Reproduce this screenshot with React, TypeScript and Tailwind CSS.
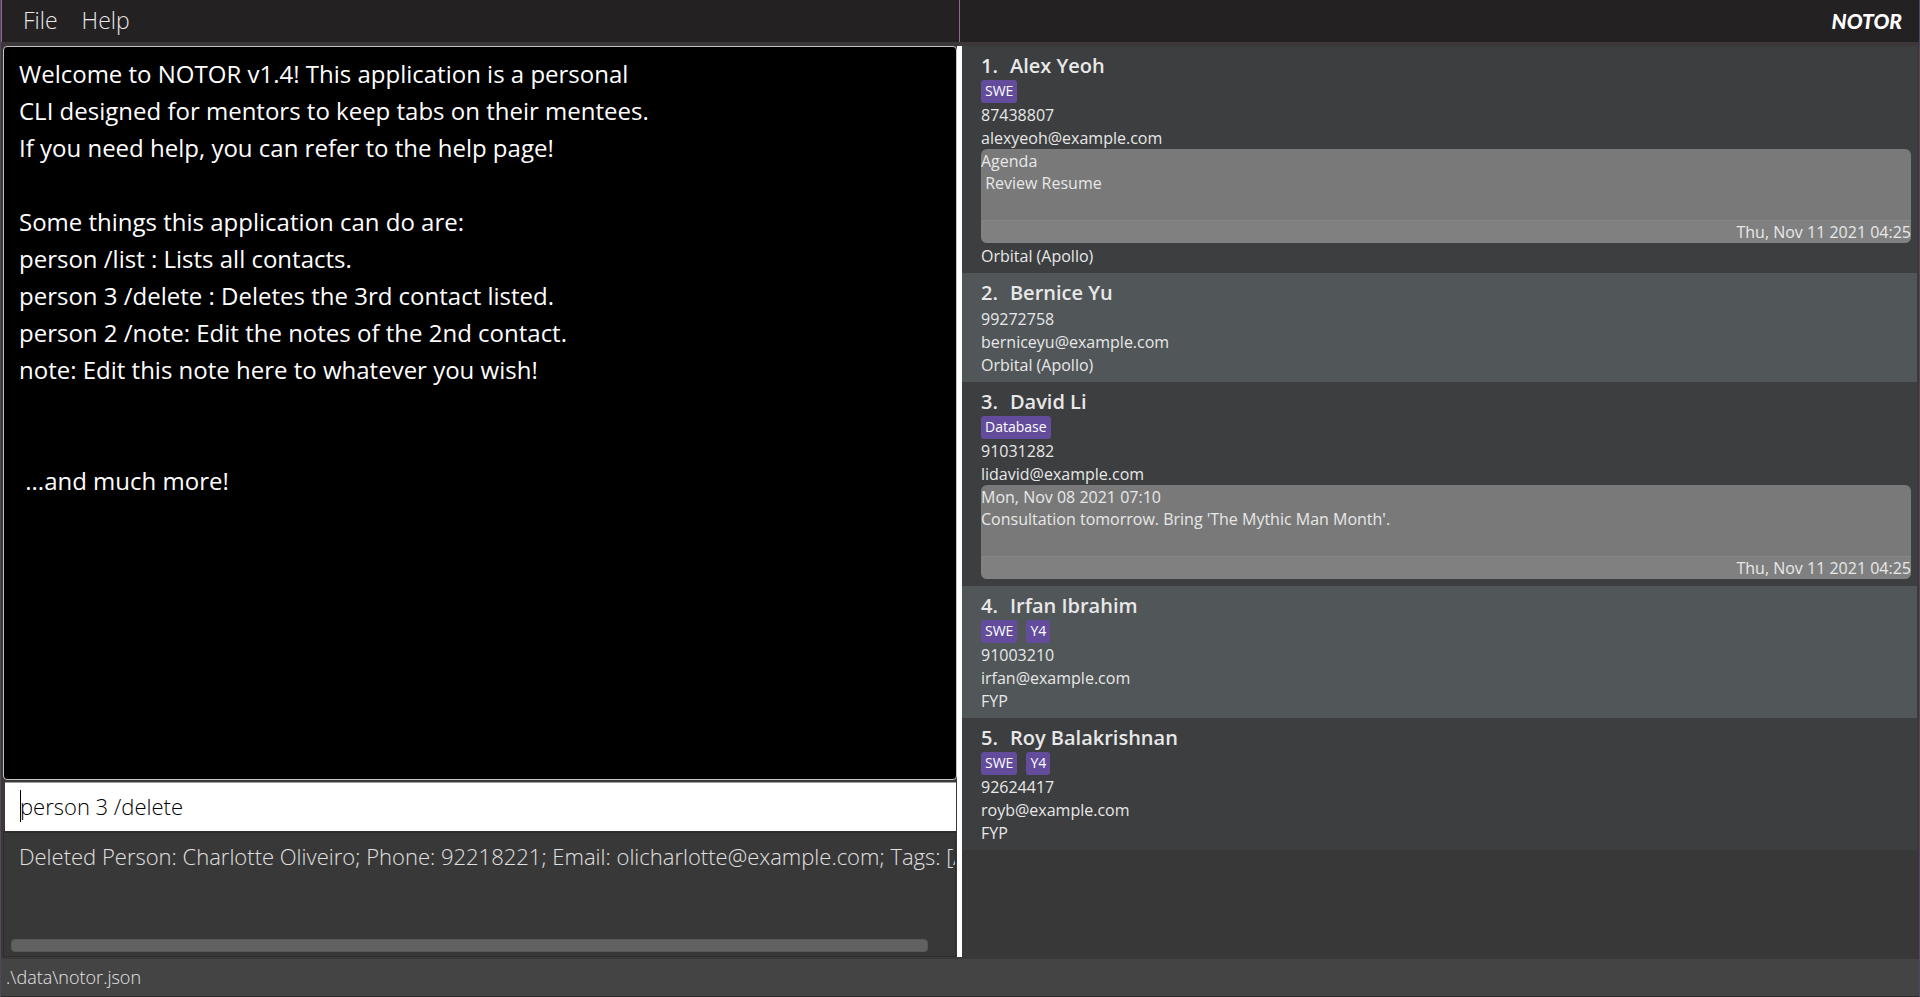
import React from 'react';

type Note = { text: string; saved: string };
type Person = {
  name: string;
  tags: string[];
  phone: string;
  email: string;
  note?: Note;
  group?: string;
};

const people: Person[] = [
  {
    name: 'Alex Yeoh',
    tags: ['SWE'],
    phone: '87438807',
    email: 'alexyeoh@example.com',
    note: { text: 'Agenda\n Review Resume', saved: 'Thu, Nov 11 2021 04:25' },
    group: 'Orbital (Apollo)',
  },
  { name: 'Bernice Yu', tags: [], phone: '99272758', email: 'berniceyu@example.com', group: 'Orbital (Apollo)' },
  {
    name: 'David Li',
    tags: ['Database'],
    phone: '91031282',
    email: 'lidavid@example.com',
    note: {
      text: "Mon, Nov 08 2021 07:10\nConsultation tomorrow. Bring 'The Mythic Man Month'.",
      saved: 'Thu, Nov 11 2021 04:25',
    },
  },
  { name: 'Irfan Ibrahim', tags: ['SWE', 'Y4'], phone: '91003210', email: 'irfan@example.com', group: 'FYP' },
  { name: 'Roy Balakrishnan', tags: ['SWE', 'Y4'], phone: '92624417', email: 'royb@example.com', group: 'FYP' },
];

const generalNote = `Welcome to NOTOR v1.4! This application is a personal
CLI designed for mentors to keep tabs on their mentees.
If you need help, you can refer to the help page!

Some things this application can do are:
person /list : Lists all contacts.
person 3 /delete : Deletes the 3rd contact listed.
person 2 /note: Edit the notes of the 2nd contact.
note: Edit this note here to whatever you wish!


 ...and much more!`;

function Header() {
  return (
    <header className="grid h-[46px] grid-cols-2 border-b-4 border-[#3c3839] bg-[#242122]">
      <nav className="flex items-center gap-6 border-x border-[#8a6a98] pb-px pl-[21px] text-[23px] font-light text-[#e8e8e8]">
        <button type="button">File</button>
        <button type="button">Help</button>
      </nav>
      <div className="flex items-center justify-end pr-[17px]">
        <h1 className="font-['Lato',sans-serif] text-[21px] font-black italic text-white">NOTOR</h1>
      </div>
    </header>
  );
}

function CommandPanel() {
  return (
    <section className="ml-px flex min-w-0 flex-col">
      <textarea
        aria-label="General note"
        spellCheck={false}
        defaultValue={generalNote}
        className="mb-[2px] block w-full flex-1 resize-none overflow-hidden rounded-[4px] border border-[#c4c4c4] bg-black px-[15px] py-2 text-[24px] leading-[37px] text-white outline-none"
      />
      <div className="relative ml-[2px] mr-px">
        <input
          aria-label="Command"
          type="text"
          defaultValue="person 3 /delete"
          className="block h-[49px] w-full border-t border-[#a0a0a0] bg-white px-[15px] pb-[3px] text-[22px] font-light text-black outline-none"
        />
        <span className="absolute left-[15px] top-2 h-8 w-px bg-black" />
      </div>
      <div className="mr-px flex h-[126px] flex-col justify-between overflow-hidden border border-t-2 border-[#2b2d2c] bg-[#383838] pt-2">
        <output className="block overflow-hidden whitespace-nowrap pl-[15px] text-[22px] font-light leading-[30px] text-[#e0e0e0]">
          Deleted Person: Charlotte Oliveiro; Phone: 92218221; Email: olicharlotte@example.com; Tags: [AI]
        </output>
        <div className="mb-1 ml-[7px] mr-[27px] h-[13px] rounded-[4px] border border-[#585858] bg-[#616161]" />
      </div>
    </section>
  );
}

function PersonCard({ person, index }: { person: Person; index: number }) {
  return (
    <li className="py-[6px] pl-[19px] pr-[6px] text-[16px] leading-[25px] text-[#e8e8e8] odd:bg-[#3c3e3f] even:bg-[#515658]">
      <h2 className="flex h-7 gap-3 text-[20px] font-semibold leading-[27px]">
        <span>{index}.</span>
        <span>{person.name}</span>
      </h2>
      {person.tags.length > 0 && (
        <div className="flex gap-[9px]">
          {person.tags.map((tag) => (
            <span
              key={tag}
              className="h-[23px] rounded-[3px] bg-[#644c9c] px-1 text-[14px] font-medium leading-[21px] text-white"
            >
              {tag}
            </span>
          ))}
        </div>
      )}
      <p className="h-[23px]">{person.phone}</p>
      <p className="h-[23px]">{person.email}</p>
      {person.note && (
        <div className="mb-px overflow-hidden rounded-[6px] bg-[#797979]">
          <p className="h-[71px] whitespace-pre-wrap pt-px leading-[22px]">{person.note.text}</p>
          <p className="h-[23px] border-t border-[#868686] bg-[#808080] text-right leading-[23px]">
            {person.note.saved}
          </p>
        </div>
      )}
      {person.group && <p className="h-[23px]">{person.group}</p>}
    </li>
  );
}

export default function App() {
  return (
    <div className="flex min-h-screen flex-col border-x border-[#54465c] bg-[#3c3839] font-['Open_Sans',sans-serif]">
      <Header />
      <main className="grid flex-1 grid-cols-[1fr_5px_1fr] pl-px pr-[2px]">
        <CommandPanel />
        <div className="bg-white" />
        <ol className="min-w-0 bg-[#383838]">
          {people.map((person, i) => (
            <PersonCard key={person.name} person={person} index={i + 1} />
          ))}
        </ol>
      </main>
      <footer className="mt-[2px] flex h-[38px] items-center border-b border-[#2b2b2b] bg-[#444444] pl-[5px] text-[18px] font-light text-[#e4e4e4]">
        .\data\notor.json
      </footer>
    </div>
  );
}
